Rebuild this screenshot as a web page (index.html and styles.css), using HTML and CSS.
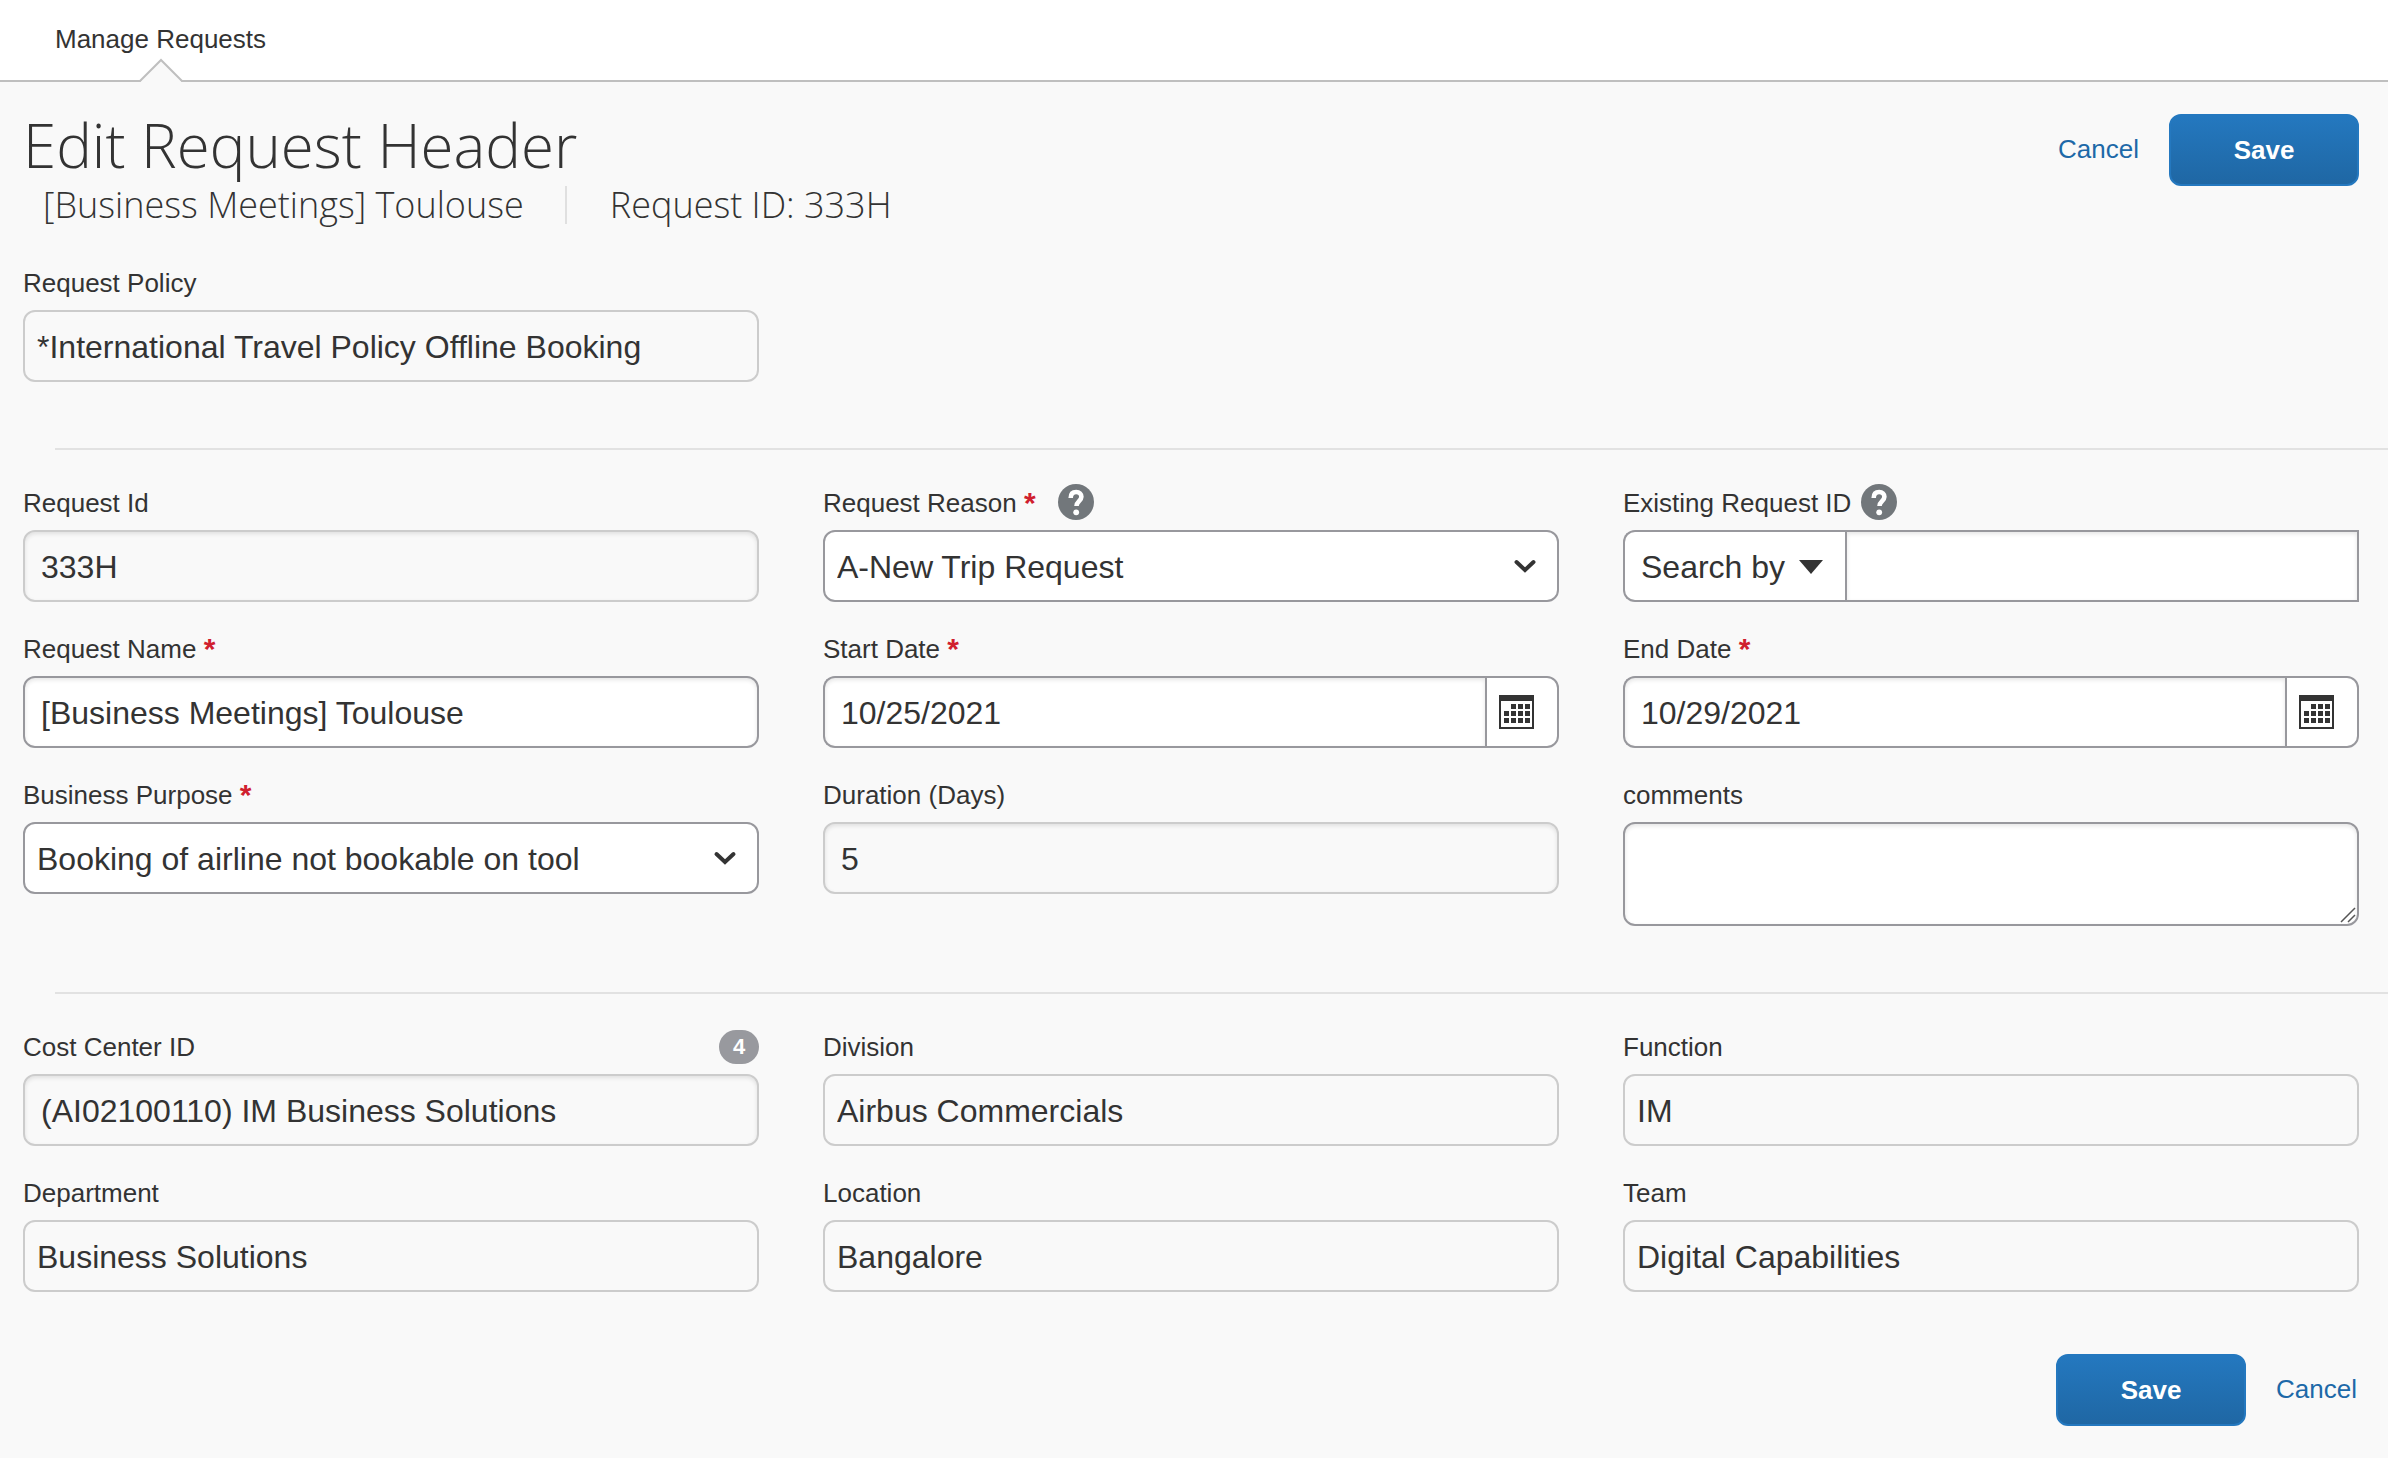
FILE: index.html
```html
<!DOCTYPE html>
<html lang="en">
<head>
<meta charset="utf-8">
<meta name="viewport" content="width=device-width, initial-scale=1">
<title>Edit Request Header</title>
<link rel="stylesheet" href="styles.css">
</head>
<body>
<svg class="sprite" aria-hidden="true">
  <symbol id="chevron" viewBox="0 0 24 16"><path d="M3.500 4l8.500 8 8.500-8" fill="none" stroke="currentColor" stroke-width="4" stroke-linecap="round"/></symbol>
  <symbol id="caret" viewBox="0 0 24 14"><path d="M0 0h24L12 14z" fill="currentColor"/></symbol>
  <symbol id="grip" viewBox="0 0 16 16"><path d="M1 15L15 1M8 15l7-7" fill="none" stroke="#555" stroke-width="1.500"/></symbol>
  <symbol id="help" viewBox="0 0 36 36">
    <circle cx="18" cy="18" r="18" fill="#72777b"/>
    <path d="M12.700 14c0-3.800 2-6 5.500-6 3.200 0 5.200 1.900 5.200 4.800 0 4.200-4.900 4.500-4.900 9.200" fill="none" stroke="#fff" stroke-width="4.600"/>
    <circle cx="18.200" cy="28.300" r="2.900" fill="#fff"/>
  </symbol>
  <symbol id="calendar" viewBox="0 0 35 34">
    <path fill="currentColor" fill-rule="evenodd" d="M0 0h35v34H0zM2 6v26h31V6z"/>
    <path fill="currentColor" d="M12 9h5v5h-5zM19 9h5v5h-5zM26 9h5v5h-5zM5 16h5v5H5zM12 16h5v5h-5zM19 16h5v5h-5zM26 16h5v5h-5zM5 23h5v5H5zM12 23h5v5h-5zM19 23h5v5h-5zM26 23h5v5h-5z"/>
  </symbol>
</svg>

<nav class="tabs">
  <a class="tab" href="#requests">Manage Requests
    <svg class="tab-notch" viewBox="0 0 44 26" aria-hidden="true"><path d="M1 26L22 4l21 22z" fill="#f9f9f9"/><path d="M0 25h1L22 4l21 21h1" fill="none" stroke="#bfbfbf" stroke-width="2"/></svg>
  </a>
</nav>

<form class="page">
  <header class="page-head">
    <div>
      <h1 class="title">Edit Request Header</h1>
      <p class="subtitle"><span class="subtitle-part">[Business Meetings] Toulouse</span><span class="subtitle-part">Request ID: 333H</span></p>
    </div>
    <div class="actions">
      <a class="cancel" href="#cancel">Cancel</a>
      <button class="save" type="submit">Save</button>
    </div>
  </header>

  <section class="grid">
    <div class="field">
      <div class="label-row"><label for="policy">Request Policy</label></div>
      <input class="control plain" id="policy" value="*International Travel Policy Offline Booking" readonly>
    </div>
  </section>

  <hr class="divider">

  <section class="grid">
    <div class="field">
      <div class="label-row"><label for="rid">Request Id</label></div>
      <input class="control locked" id="rid" value="333H" readonly>
    </div>
    <div class="field">
      <div class="label-row"><label for="reason">Request Reason <span class="required">*</span></label><button class="help help-spaced" type="button" aria-label="Help"><svg><use href="#help"/></svg></button></div>
      <div class="stack">
        <select class="control select" id="reason"><option>A-New Trip Request</option></select>
        <svg class="chevron" aria-hidden="true"><use href="#chevron"/></svg>
      </div>
    </div>
    <div class="field">
      <div class="label-row"><label for="existing">Existing Request ID</label><button class="help" type="button" aria-label="Help"><svg><use href="#help"/></svg></button></div>
      <div class="group">
        <button class="search-by" type="button">Search by <svg class="caret" aria-hidden="true"><use href="#caret"/></svg></button>
        <input class="control square" id="existing">
      </div>
    </div>

    <div class="field">
      <div class="label-row"><label for="name">Request Name <span class="required">*</span></label></div>
      <input class="control" id="name" value="[Business Meetings] Toulouse">
    </div>
    <div class="field">
      <div class="label-row"><label for="start">Start Date <span class="required">*</span></label></div>
      <div class="group">
        <input class="control date" id="start" value="10/25/2021">
        <button class="pick" type="button" aria-label="Pick start date"><svg><use href="#calendar"/></svg></button>
      </div>
    </div>
    <div class="field">
      <div class="label-row"><label for="end">End Date <span class="required">*</span></label></div>
      <div class="group">
        <input class="control date" id="end" value="10/29/2021">
        <button class="pick" type="button" aria-label="Pick end date"><svg><use href="#calendar"/></svg></button>
      </div>
    </div>

    <div class="field">
      <div class="label-row"><label for="purpose">Business Purpose <span class="required">*</span></label></div>
      <div class="stack">
        <select class="control select" id="purpose"><option>Booking of airline not bookable on tool</option></select>
        <svg class="chevron" aria-hidden="true"><use href="#chevron"/></svg>
      </div>
    </div>
    <div class="field">
      <div class="label-row"><label for="duration">Duration (Days)</label></div>
      <input class="control locked" id="duration" value="5" readonly>
    </div>
    <div class="field">
      <div class="label-row"><label for="comments">comments</label></div>
      <div class="stack">
        <textarea class="control comments" id="comments"></textarea>
        <svg class="grip" aria-hidden="true"><use href="#grip"/></svg>
      </div>
    </div>
  </section>

  <hr class="divider">

  <section class="grid">
    <div class="field">
      <div class="label-row"><label for="cost">Cost Center ID</label><span class="badge">4</span></div>
      <input class="control locked" id="cost" value="(AI02100110) IM Business Solutions" readonly>
    </div>
    <div class="field">
      <div class="label-row"><label for="division">Division</label></div>
      <input class="control plain" id="division" value="Airbus Commercials" readonly>
    </div>
    <div class="field">
      <div class="label-row"><label for="function">Function</label></div>
      <input class="control plain" id="function" value="IM" readonly>
    </div>
    <div class="field">
      <div class="label-row"><label for="department">Department</label></div>
      <input class="control plain" id="department" value="Business Solutions" readonly>
    </div>
    <div class="field">
      <div class="label-row"><label for="location">Location</label></div>
      <input class="control plain" id="location" value="Bangalore" readonly>
    </div>
    <div class="field">
      <div class="label-row"><label for="team">Team</label></div>
      <input class="control plain" id="team" value="Digital Capabilities" readonly>
    </div>
  </section>

  <footer class="actions foot">
    <button class="save" type="submit">Save</button>
    <a class="cancel" href="#cancel">Cancel</a>
  </footer>
</form>
</body>
</html>
```

FILE: styles.css
```css
* { box-sizing: border-box; }

body {
  margin: 0;
  background: #f9f9f9;
  color: #333;
  font: 26px/32px "Liberation Sans", Arial, sans-serif;
}

button, input, select, textarea { font: inherit; color: inherit; }
button { cursor: pointer; }
a { text-decoration: none; }
svg { display: block; }
.sprite { display: none; }

/* Tab bar */
.tabs {
  display: flex;
  height: 82px;
  padding: 0 55px;
  background: #fff;
  border-bottom: 2px solid #bfbfbf;
}
.tab { position: relative; padding-top: 23px; color: #333; }
.tab-notch {
  position: absolute;
  left: 50%;
  bottom: -2px;
  width: 44px;
  height: 26px;
  margin-left: -22px;
}

/* Heading */
.page { padding: 32px 29px 32px 23px; }
.page-head {
  display: flex;
  justify-content: space-between;
  align-items: flex-start;
  margin-bottom: 44px;
}
.title {
  margin: 0;
  font: 300 60px/62px "Open Sans", sans-serif;
}
.subtitle {
  display: flex;
  margin: 0;
  padding: 10px 0 0 20px;
  font: 300 36px/38px "Open Sans", sans-serif;
}
.subtitle-part + .subtitle-part {
  margin-left: 41px;
  padding-left: 43px;
  border-left: 2px solid #e0e0e0;
}

.actions { display: flex; align-items: center; gap: 30px; }
.foot { justify-content: flex-end; margin-top: 62px; padding-right: 2px; }
.cancel { padding-bottom: 2px; color: #1d69a8; }
.save {
  width: 190px;
  height: 72px;
  border: 2px solid #2478bf;
  border-radius: 12px;
  background: linear-gradient(#2478bf, #1f67a4);
  color: #fff;
  font-weight: bold;
}

/* Form */
.grid {
  display: grid;
  grid-template-columns: repeat(3, minmax(0, 1fr));
  gap: 32px 64px;
}
.divider {
  height: 2px;
  margin: 66px -29px 38px 32px;
  border: 0;
  background: #e2e2e2;
}
.label-row {
  display: flex;
  align-items: flex-end;
  height: 32px;
  margin-bottom: 10px;
  line-height: 34px;
}
.required {
  color: #d0202e;
  font-size: 30px;
  font-weight: bold;
  line-height: 0;
  vertical-align: -1px;
}
.control {
  display: block;
  width: 100%;
  height: 72px;
  margin: 0;
  padding: 2px 16px 0;
  border: 2px solid #98989d;
  border-radius: 12px;
  background: #fff;
  box-shadow: inset 0 2px 4px rgba(0, 0, 0, 0.1);
  font-size: 32px;
  line-height: 40px;
  outline: 0;
}
.locked, .plain { border-color: #ccc; background: #f9f9f9; }
.plain { padding: 2px 12px 0; box-shadow: none; }

/* A control with its glyph laid over it */
.stack { display: grid; align-items: center; }
.stack > * { grid-area: 1 / 1; }
.select { appearance: none; padding: 2px 12px 0; box-shadow: none; }
.chevron {
  justify-self: end;
  width: 24px;
  height: 16px;
  margin-right: 22px;
  pointer-events: none;
}
.comments { height: 104px; padding: 12px 16px; resize: none; }
.grip {
  place-self: end;
  width: 16px;
  height: 16px;
  margin: 0 3px 3px 0;
}

.group { display: flex; }
.group .control { flex: 1; min-width: 0; }
.group .date { border-radius: 12px 0 0 12px; border-right: 0; }
.group .square { border-radius: 0; }
.pick {
  width: 74px;
  padding: 0 0 0 12px;
  border: 2px solid #98989d;
  border-radius: 0 12px 12px 0;
  background: #fff;
}
.pick svg { width: 35px; height: 34px; }
.search-by {
  display: flex;
  align-items: center;
  gap: 14px;
  padding: 2px 22px 0 16px;
  border: 2px solid #98989d;
  border-right: 0;
  border-radius: 12px 0 0 12px;
  background: #fff;
  font-size: 32px;
}
.caret { width: 24px; height: 14px; }

.help {
  width: 36px;
  height: 36px;
  margin-left: 10px;
  padding: 0;
  border: 0;
  background: none;
}
.help-spaced { margin-left: 22px; }
.help svg { width: 36px; height: 36px; }
.badge {
  width: 40px;
  margin-left: auto;
  border-radius: 17px;
  background: #98999e;
  color: #fff;
  font-size: 22px;
  font-weight: bold;
  line-height: 34px;
  text-align: center;
}
```
